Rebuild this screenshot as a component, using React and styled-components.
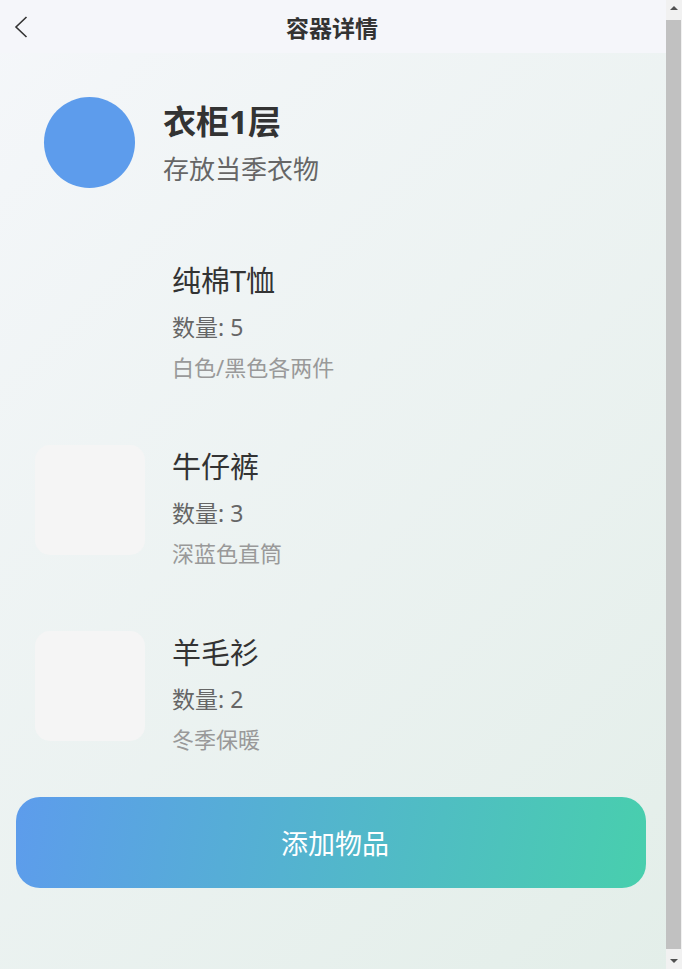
import React from "react";
import styled, { createGlobalStyle } from "styled-components";

const GlobalStyle = createGlobalStyle`
  html, body {
    margin: 0;
    padding: 0;
  }
  body {
    font-family: "Noto Sans", "Noto Sans CJK SC", sans-serif;
    color: #333333;
  }
`;

export const Page = styled.div`
  margin-right: 16px;
  background: linear-gradient(135deg, #f5f7fa 0%, #e3eee9 100%);
  padding-bottom: 92px;
`;

export const Header = styled.div`
  position: relative;
  height: 53px;
  display: flex;
  align-items: center;
  justify-content: center;
  background: #f5f6fa;
`;

export const BackButton = styled.div`
  position: absolute;
  left: 12px;
  top: 15px;
  width: 18px;
  height: 24px;
  display: flex;
  align-items: center;
  justify-content: center;
`;

export const HeaderTitle = styled.h1`
  margin: 0 2px 0 0;
  font-family: "Noto Sans CJK SC", sans-serif;
  font-size: 23px;
  font-weight: bold;
  color: #333333;
`;

export const Content = styled.div`
  padding: 16px 20px 0 16px;
`;

export const InfoCard = styled.div`
  display: flex;
  align-items: center;
  gap: 28px;
  padding: 28px;
`;

export const Avatar = styled.div`
  width: 91px;
  height: 91px;
  border-radius: 50%;
  background: #5d9cec;
  flex-shrink: 0;
`;

export const InfoText = styled.div`
  display: flex;
  flex-direction: column;
  margin-top: 2px;
`;

export const Title = styled.div`
  font-size: 33px;
  font-weight: bold;
  line-height: 42px;
  color: #333333;
`;

export const Subtitle = styled.div`
  margin-top: 8px;
  font-size: 26px;
  line-height: 36px;
  color: #666666;
`;

export const ItemList = styled.div`
  display: flex;
  flex-direction: column;
  margin-top: 12px;
`;

export const Item = styled.div`
  display: flex;
  align-items: flex-start;
  gap: 27px;
  padding: 31px 19px;
`;

export const Thumb = styled.div`
  width: 110px;
  height: 110px;
  border-radius: 15px;
  flex-shrink: 0;
  background: ${(p) => (p.empty ? "transparent" : "#f5f5f5")};
`;

export const ItemInfo = styled.div`
  display: flex;
  flex-direction: column;
  margin-top: 2px;
`;

export const ItemName = styled.div`
  font-size: 29px;
  line-height: 39px;
  color: #333333;
`;

export const ItemCount = styled.div`
  margin-top: 10px;
  font-size: 23px;
  line-height: 34px;
  color: #666666;
`;

export const ItemDesc = styled.div`
  margin-top: 8px;
  font-size: 22px;
  line-height: 31px;
  color: #999999;
`;

export const AddButton = styled.button`
  display: flex;
  width: 100%;
  height: 91px;
  margin-top: 11px;
  padding: 0 0 0 8px;
  align-items: center;
  justify-content: center;
  border: none;
  border-radius: 24px;
  background: linear-gradient(100deg, #5d9cec 0%, #48cfad 100%);
  font-family: "Noto Sans CJK SC", sans-serif;
  font-size: 27px;
  color: #ffffff;
  cursor: pointer;
`;

/* window scrollbar, as the reference shows it */
export const ScrollBar = styled.div`
  position: fixed;
  top: 0;
  right: 0;
  bottom: 0;
  width: 16px;
  display: flex;
  flex-direction: column;
  background: #f1f1f1;
`;

export const ScrollArrow = styled.div`
  height: 16px;
  display: flex;
  align-items: center;
  justify-content: center;

  &::after {
    content: "";
    border-left: 4px solid transparent;
    border-right: 4px solid transparent;
    ${(p) =>
      p.down
        ? "border-top: 4px solid #505050;"
        : "border-bottom: 4px solid #505050;"}
  }
`;

export const ScrollThumb = styled.div`
  flex: 1;
  margin: 4px 1px 4px 0;
  background: #c1c1c1;
`;

const items = [
  { name: "纯棉T恤", count: 5, desc: "白色/黑色各两件", empty: true },
  { name: "牛仔裤", count: 3, desc: "深蓝色直筒" },
  { name: "羊毛衫", count: 2, desc: "冬季保暖" },
];

const App = () => {
  return (
    <Page>
      <GlobalStyle />
      <Header>
        <BackButton>
          <svg width="14" height="22" viewBox="0 0 14 22" fill="none">
            <path d="M12.5 1 L2 11 L12.5 21" stroke="#333333" strokeWidth="1.6" />
          </svg>
        </BackButton>
        <HeaderTitle>容器详情</HeaderTitle>
      </Header>
      <Content>
        <InfoCard>
          <Avatar />
          <InfoText>
            <Title>衣柜1层</Title>
            <Subtitle>存放当季衣物</Subtitle>
          </InfoText>
        </InfoCard>
        <ItemList>
          {items.map((item) => (
            <Item key={item.name}>
              <Thumb empty={item.empty} />
              <ItemInfo>
                <ItemName>{item.name}</ItemName>
                <ItemCount>数量: {item.count}</ItemCount>
                <ItemDesc>{item.desc}</ItemDesc>
              </ItemInfo>
            </Item>
          ))}
        </ItemList>
        <AddButton>添加物品</AddButton>
      </Content>
      <ScrollBar>
        <ScrollArrow />
        <ScrollThumb />
        <ScrollArrow down />
      </ScrollBar>
    </Page>
  );
};

export default App;
